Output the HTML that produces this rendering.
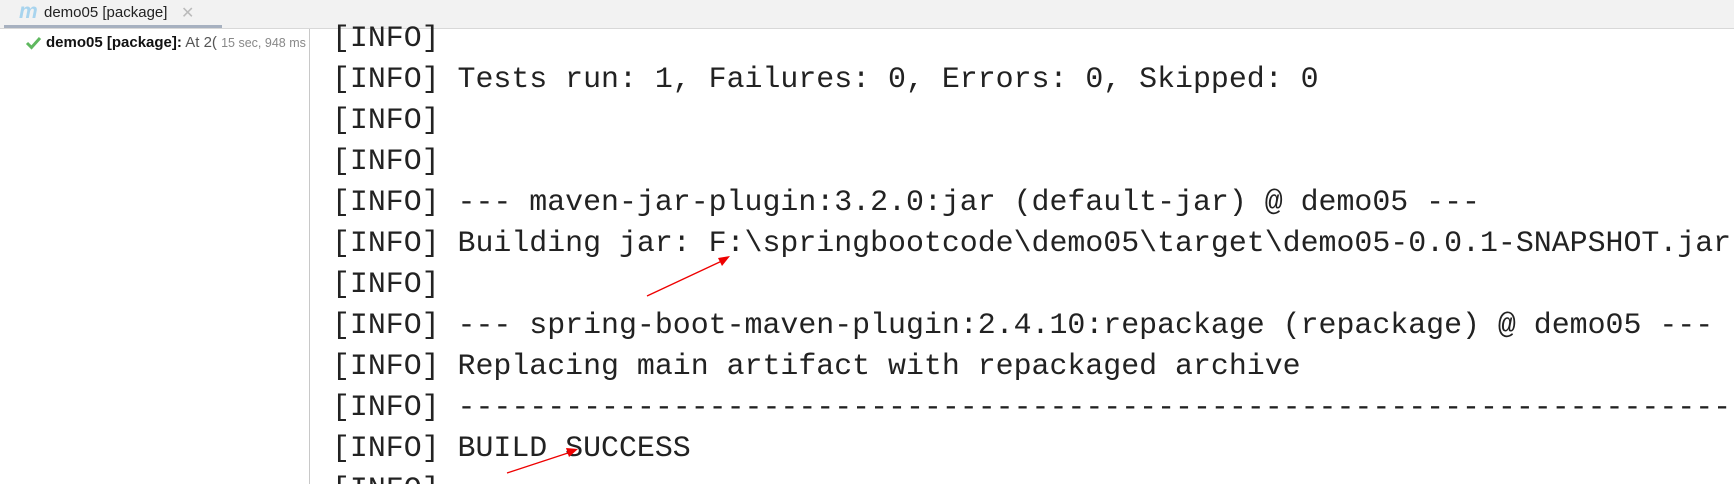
<!DOCTYPE html>
<html><head><meta charset="utf-8"><style>
html,body{margin:0;padding:0;width:1734px;height:484px;overflow:hidden;background:#fff;position:relative;font-family:"Liberation Sans",sans-serif}
.tabbar{position:absolute;left:0;top:0;width:1734px;height:28px;background:#f2f2f2;border-bottom:1px solid #d8d8d8}
.tabul{position:absolute;left:4px;top:25px;width:218px;height:3px;background:#a7b1c0}
.tabt{position:absolute;left:44px;top:4px;font-size:15px;color:#222}
.m{position:absolute;left:19px;top:0px;font-size:21px;font-style:italic;font-weight:bold;color:#a8d4ee}
.x{position:absolute;left:181px;top:3px;font-size:16px;color:#bbb}
.sep{position:absolute;left:309px;top:29px;width:1px;height:455px;background:#c8c8c8}
.row{position:absolute;left:46px;top:34px;font-size:15px;white-space:nowrap}
.row b{color:#111}
.row .g{color:#888;font-size:12.5px}
.log{position:absolute;left:332px;top:18px;width:1402px;height:466px;overflow:hidden;font-family:"Liberation Mono",monospace;font-size:29.9px;line-height:41px;color:#222;white-space:pre}
</style></head><body>
<div class="tabbar"><span class="m">m</span><span class="tabt">demo05 [package]</span><span class="x">✕</span><div class="tabul"></div></div>
<svg style="position:absolute;left:25px;top:36px" width="18" height="14"><path d="M2 7 L6.5 11.5 L15 2" stroke="#5fb85f" stroke-width="3" fill="none"/></svg>
<div class="row"><b>demo05 [package]:</b> <span style="color:#555">At 2(</span> <span class="g">15 sec, 948 ms</span></div>
<div class="sep"></div>
<div class="log">[INFO]
[INFO] Tests run: 1, Failures: 0, Errors: 0, Skipped: 0
[INFO]
[INFO]
[INFO] --- maven-jar-plugin:3.2.0:jar (default-jar) @ demo05 ---
[INFO] Building jar: F:\springbootcode\demo05\target\demo05-0.0.1-SNAPSHOT.jar
[INFO]
[INFO] --- spring-boot-maven-plugin:2.4.10:repackage (repackage) @ demo05 ---
[INFO] Replacing main artifact with repackaged archive
[INFO] ------------------------------------------------------------------------
[INFO] BUILD SUCCESS
[INFO]</div>
<svg style="position:absolute;left:0;top:0" width="1734" height="484">
<line x1="647" y1="296" x2="724" y2="260" stroke="#e00" stroke-width="1.3"/>
<polygon points="730,256 718,258 722,266" fill="#e00"/>
<line x1="507" y1="473" x2="571" y2="452" stroke="#e00" stroke-width="1.3"/>
<polygon points="578,449 566,448 569,457" fill="#e00"/>
</svg>
</body></html>
